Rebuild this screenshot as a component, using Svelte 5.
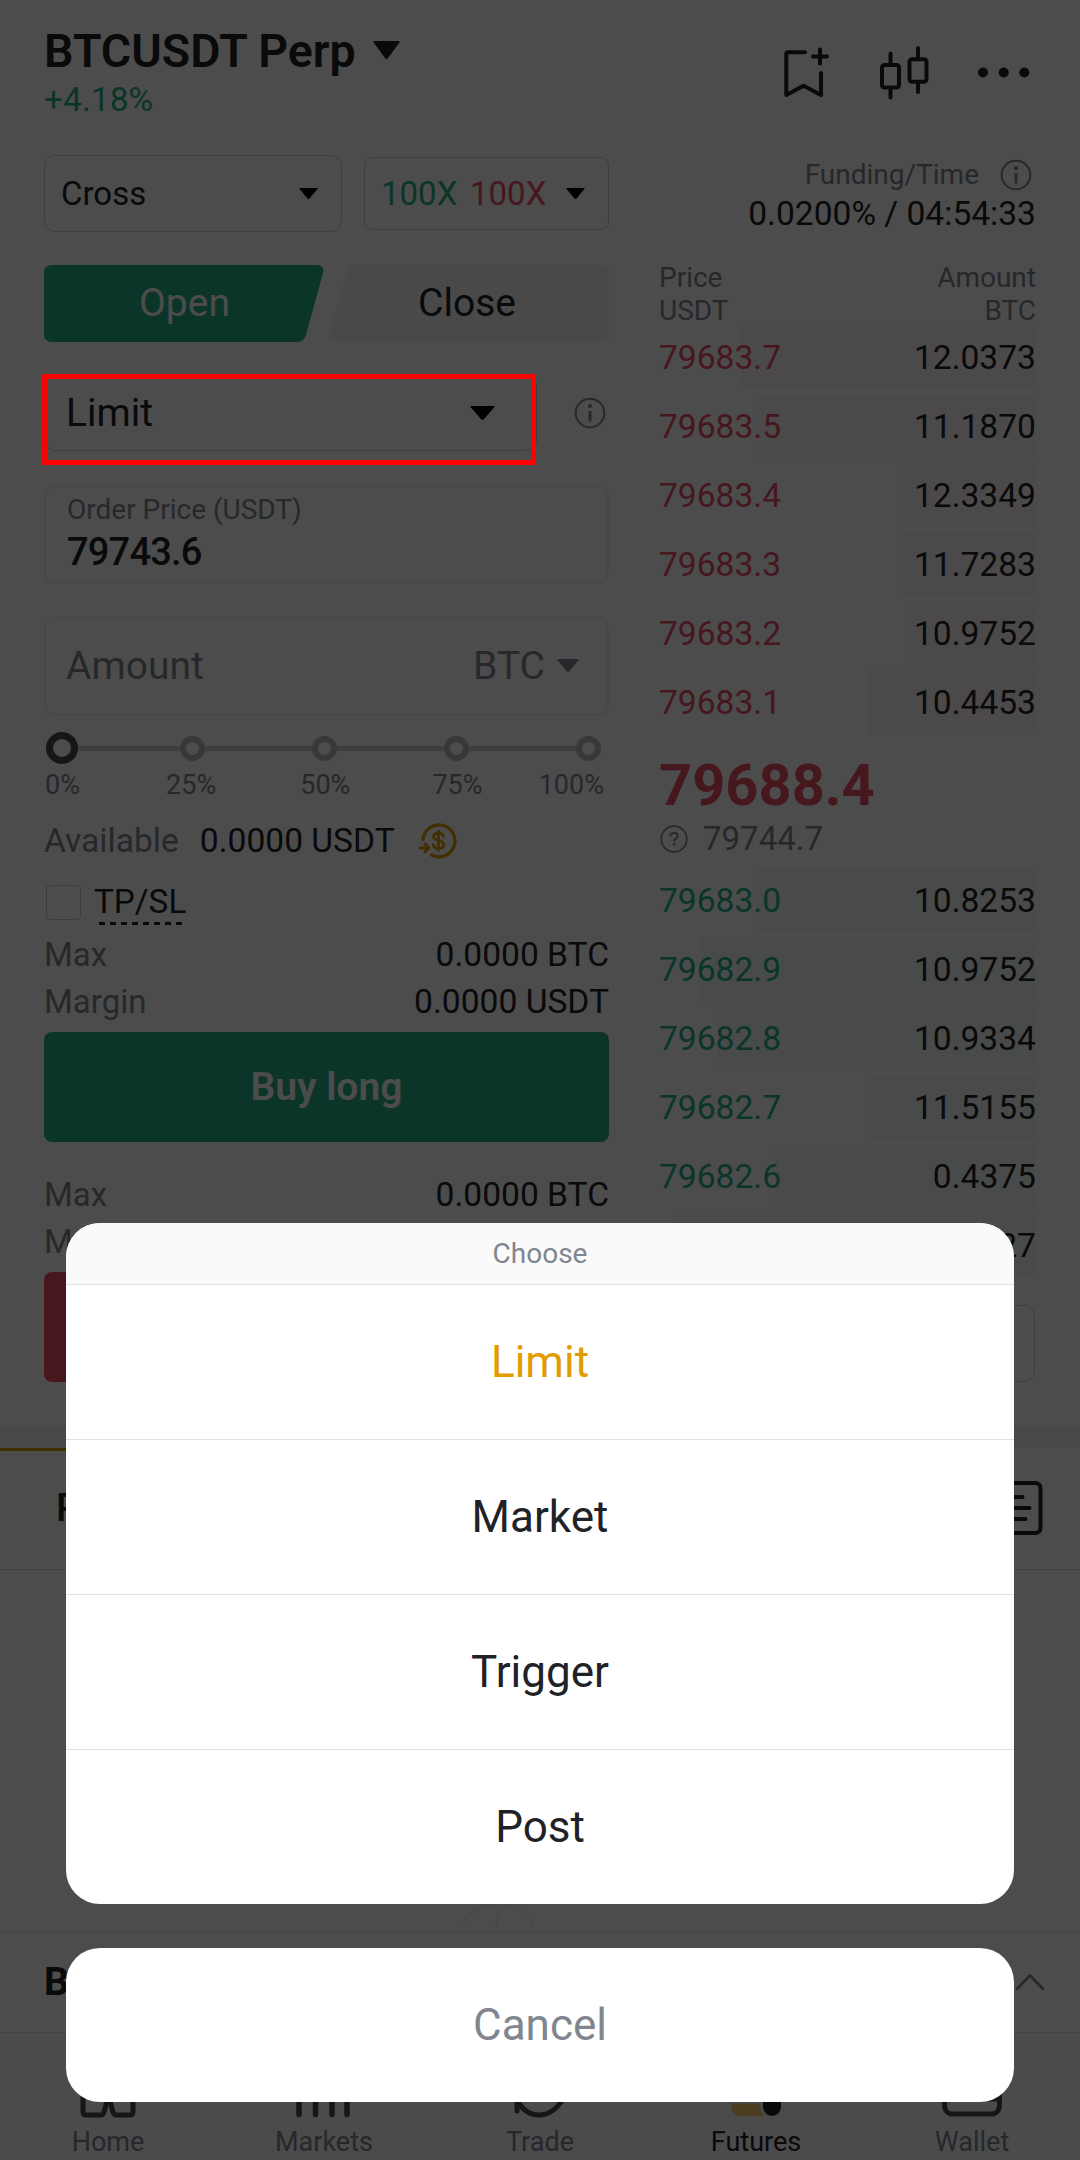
<script>
  const asks = [
    { price: "79683.7", amount: "12.0373", depth: 294 },
    { price: "79683.5", amount: "11.1870", depth: 276 },
    { price: "79683.4", amount: "12.3349", depth: 139 },
    { price: "79683.3", amount: "11.7283", depth: 132 },
    { price: "79683.2", amount: "10.9752", depth: 124 },
    { price: "79683.1", amount: "10.4453", depth: 167 },
  ];

  const bids = [
    { price: "79683.0", amount: "10.8253", depth: 276 },
    { price: "79682.9", amount: "10.9752", depth: 335 },
    { price: "79682.8", amount: "10.9334", depth: 317 },
    { price: "79682.7", amount: "11.5155", depth: 164 },
    { price: "79682.6", amount: "0.4375", depth: 260 },
    { price: "79682.5", amount: "10.2327", depth: 363 },
  ];

  const steps = ["0%", "25%", "50%", "75%", "100%"];
  const options = ["Limit", "Market", "Trigger", "Post"];

  let selected = $state("Limit");
</script>

{#snippet caret(w, h)}
  <svg class="caret" width={w} height={h} viewBox="0 0 18 11" preserveAspectRatio="none">
    <path d="M1 0h16q1.2 0 .5 1l-7.6 9.5q-.9 1-1.8 0L.5 1Q-.2 0 1 0z" fill="currentColor" />
  </svg>
{/snippet}

{#snippet info()}
  <svg class="info" width="32" height="32" viewBox="0 0 32 32" fill="none" stroke="currentColor">
    <circle cx="16" cy="16" r="14.3" stroke-width="2" />
    <circle cx="16" cy="9" r="2.1" fill="currentColor" stroke="none" />
    <path d="M16 14v10.5" stroke-width="3" />
  </svg>
{/snippet}

{#snippet row(item, side)}
  <div class="book-row">
    <div class="depth {side}" style="width: {item.depth}px"></div>
    <span class="price {side}">{item.price}</span>
    <span>{item.amount}</span>
  </div>
{/snippet}

<div class="screen">
  <header>
    <div>
      <div class="pair">BTCUSDT Perp {@render caret(27, 18)}</div>
      <div class="change">+4.18%</div>
    </div>
    <div class="actions">
      <svg width="54" height="58" viewBox="0 0 54 58" fill="none" stroke="currentColor" stroke-width="4" stroke-linecap="round" stroke-linejoin="round">
        <path d="M25 8.300H8q-1.700 0-1.700 1.700V51L23.500 41.700 41 51V29" />
        <path d="M40 5.500v14M33 12.500h14" />
      </svg>
      <svg width="56" height="58" viewBox="0 0 56 58" fill="none" stroke="currentColor" stroke-width="4" stroke-linecap="round">
        <rect x="6" y="21" width="17" height="22.500" rx="2.500" />
        <path d="M14.500 20V9.500M14.500 44v9.500" />
        <rect x="33.500" y="15.300" width="17" height="22.500" rx="2.500" />
        <path d="M42 14V4M42 38.500v9.500" />
      </svg>
      <svg width="60" height="58" viewBox="0 0 60 58" fill="currentColor">
        <circle cx="9" cy="28.500" r="5" />
        <circle cx="29.700" cy="28.500" r="5" />
        <circle cx="50.300" cy="28.500" r="5" />
      </svg>
    </div>
  </header>

  <main>
    <section class="form">
      <div class="modes">
        <div class="select mode">Cross {@render caret(19, 11)}</div>
        <div class="select leverage">
          <span class="buy">100X</span><span class="sell">100X</span>
          {@render caret(19, 11)}
        </div>
      </div>

      <div class="sides">
        <svg width="565" height="77" viewBox="0 0 565 77">
          <path class="open-shape" d="M8 0h264q9 0 7 8l-17 62q-2 7-9 7H8q-8 0-8-8V8q0-8 8-8z" />
          <path class="close-shape" d="M313 0h244q8 0 8 8v61q0 8-8 8H292q-9 0-7-8l18-62q2-7 10-7z" />
        </svg>
        <span class="open">Open</span>
        <span class="close">Close</span>
      </div>

      <div class="type-row">
        <div class="select type">
          {selected}
          {@render caret(25, 14)}
          <div class="highlight"></div>
        </div>
        {@render info()}
      </div>

      <div class="field order">
        <span class="label">Order Price (USDT)</span>
        <span class="value">79743.6</span>
      </div>

      <div class="field amount">
        <span>Amount</span>
        <span class="unit">BTC {@render caret(22, 13)}</span>
      </div>

      <div class="slider">
        {#each steps as step, i}
          <i class:current={i === 0}></i>
        {/each}
      </div>
      <div class="ticks">
        {#each steps as step}
          <span>{step}</span>
        {/each}
      </div>

      <div class="available">
        <span class="muted">Available</span>
        <span class="funds">0.0000 USDT</span>
        <svg width="40" height="38" viewBox="0 0 40 38" fill="none" stroke="currentColor" stroke-width="3.200" stroke-linecap="round" stroke-linejoin="round">
          <path d="M5 17.500A16 16 0 1 1 13.500 33" />
          <path d="M1.700 26h8.500M7 22.200l3.800 3.800L7 29.800" />
          <path d="M25.500 14.500c-.5-2.300-2.300-3.500-5-3.500-3 0-5 1.400-5 3.700 0 2.500 2 3.200 5 3.800s5.200 1.400 5.200 4-2.200 3.900-5.200 3.900c-2.900 0-4.900-1.300-5.400-3.700M20.500 9v19.500" stroke-width="2.700" />
        </svg>
      </div>

      <div class="tpsl">
        <span class="box"></span>
        <span class="tpsl-label">TP/SL
          <svg width="84" height="3" viewBox="0 0 84 3"><path d="M0 1.500h84" stroke="currentColor" stroke-width="3" stroke-dasharray="6 5" /></svg>
        </span>
      </div>

      <div class="line"><span class="muted">Max</span><span>0.0000 BTC</span></div>
      <div class="line"><span class="muted">Margin</span><span>0.0000 USDT</span></div>
      <button class="submit long">Buy long</button>

      <div class="line second"><span class="muted">Max</span><span>0.0000 BTC</span></div>
      <div class="line"><span class="muted">Margin</span></div>
      <button class="submit short" aria-label="Sell short"></button>
    </section>

    <section class="book">
      <div class="funding">Funding/Time {@render info()}</div>
      <div class="countdown">0.0200% / 04:54:33</div>
      <div class="book-head">
        <span>Price<br />USDT</span>
        <span class="right">Amount<br />BTC</span>
      </div>
      {#each asks as item}
        {@render row(item, "sell")}
      {/each}
      <div class="last">79688.4</div>
      <div class="mark">
        <svg width="30" height="30" viewBox="0 0 30 30" fill="none" stroke="currentColor" stroke-width="1.700">
          <circle cx="15" cy="15" r="12.800" />
          <path d="M11.300 12.300c0-2.100 1.500-3.400 3.700-3.400s3.700 1.300 3.700 3.100c0 2.600-3.500 2.700-3.500 5.300" stroke-width="2" />
          <circle cx="15.100" cy="20.300" r="1.300" fill="currentColor" stroke="none" />
        </svg>
        79744.7
      </div>
      {#each bids as item}
        {@render row(item, "buy")}
      {/each}
      <div class="precision"></div>
    </section>
  </main>

  <section class="positions">
    <div class="tabs">
      <span class="tab">Positions</span>
      <svg width="50" height="56" viewBox="0 0 50 56" fill="none" stroke="currentColor" stroke-width="4" stroke-linecap="round">
        <rect x="2.500" y="3" width="44" height="50" rx="5" />
        <path d="M12 17h16.500M12 28h23.500M12 39h19.500" />
      </svg>
    </div>
    <div class="empty">
      <svg width="84" height="30" viewBox="0 0 84 30" fill="none" stroke="currentColor" stroke-width="1.800">
        <path d="M1 30C9 12 24 2 45 1c17 2 29 13 35 29" />
        <path d="M41 30C39 17 43 8 53 2" />
      </svg>
    </div>
    <div class="chart-bar">
      <strong>BTCUSDT Perp Chart</strong>
      <svg width="32" height="20" viewBox="0 0 32 20" fill="none" stroke="currentColor" stroke-width="2.700" stroke-linecap="round" stroke-linejoin="round">
        <path d="M3 17L16 3.500 29 17" />
      </svg>
    </div>
  </section>

  <nav>
    <div class="item">
      <svg width="60" height="56" viewBox="0 0 60 56">
        <path d="M5 20L30 4l25 16v30q0 3-3 3H38q-2 0-3-3-3-8-3-16h-3q0 8-3 16-1 3-3 3H8q-3 0-3-3z" />
      </svg>
      Home
    </div>
    <div class="item">
      <svg width="60" height="56" viewBox="0 0 60 56">
        <path d="M5 22v30.500M21.500 12v40.500M38 18v34.500M53 6v46.500" stroke-width="5.500" />
      </svg>
      Markets
    </div>
    <div class="item">
      <svg width="60" height="56" viewBox="0 0 60 56">
        <path d="M7 49V38q8 15 22 15t24-16M6 22Q14 6 30 5t24 16" />
      </svg>
      Trade
    </div>
    <div class="item active">
      <svg width="60" height="56" viewBox="0 0 60 56">
        <path class="accent" d="M5 41.500h28.500q.5 7 4.500 12.500H13q-8 0-8-12.500z" />
        <rect class="ink" x="37" y="24" width="18" height="30" rx="9" />
      </svg>
      Futures
    </div>
    <div class="item">
      <svg width="60" height="56" viewBox="0 0 60 56">
        <rect x="2.500" y="8" width="55" height="44" rx="8" />
        <path d="M58 23H42q-7 0-7 7t7 7h16" />
      </svg>
      Wallet
    </div>
  </nav>

  <div class="scrim"></div>

  <div class="sheet">
    <div class="group">
      <div class="sheet-title">Choose</div>
      {#each options as option}
        <button class:selected={option === selected} onclick={() => (selected = option)}>{option}</button>
      {/each}
    </div>
    <button class="cancel">Cancel</button>
  </div>
</div>

<style>
  :global(body) {
    margin: 0;
    background: #fff;
  }

  .screen {
    position: relative;
    box-sizing: border-box;
    width: 1080px;
    height: 2160px;
    overflow: hidden;
    background: #fff;
    color: #1f2226;
    font-family: Roboto, "Liberation Sans", sans-serif;
    font-size: 33.600px;
    line-height: 40px;
  }

  .screen * {
    box-sizing: border-box;
  }

  svg {
    display: block;
    flex: none;
  }

  button {
    display: block;
    width: 100%;
    padding: 0;
    border: 0;
    background: none;
    color: inherit;
    font: inherit;
  }

  .muted { color: #81858f; }
  .buy { color: #28b289; }
  .sell { color: #ed4d67; }

  header {
    display: flex;
    justify-content: space-between;
    height: 155px;
    padding: 23px 46px 0 44px;
  }

  .pair {
    display: flex;
    align-items: center;
    gap: 17px;
    font-size: 46.500px;
    font-weight: 600;
    line-height: 56px;
  }

  .pair .caret { margin-bottom: 2px; }

  .change {
    margin-top: 2px;
    line-height: 38px;
    color: #28b289;
  }

  .actions {
    display: flex;
    gap: 42px;
    padding-top: 21px;
  }

  main {
    display: grid;
    grid-template-columns: 565px 377px;
    gap: 50px;
    height: 1271px;
    padding: 0 44px;
  }

  .modes {
    display: flex;
    align-items: center;
    gap: 22px;
  }

  .select {
    display: flex;
    align-items: center;
    justify-content: space-between;
    border: 1px solid #cfcfd2;
    border-radius: 11px;
  }

  .select .caret { color: #000; }

  .mode {
    width: 298px;
    height: 77px;
    padding: 0 23px 0 16px;
    font-size: 33px;
  }

  .leverage {
    width: 245px;
    height: 73px;
    padding: 0 23px 0 16px;
    border-radius: 8px;
    font-size: 33px;
  }

  .leverage .sell { margin: 0 6px 0 -1px; }

  .sides {
    display: grid;
    grid-template-columns: 281px 284px;
    margin-top: 33px;
    font-size: 39px;
    line-height: 77px;
    text-align: center;
  }

  .sides svg {
    grid-area: 1 / 1 / 2 / 3;
  }

  .sides span { grid-row: 1; }
  .open { grid-column: 1; color: #fff; z-index: 0; }
  .close { grid-column: 2; z-index: 0; }
  .open-shape { fill: #28b289; }
  .close-shape { fill: #f3f3f3; }

  .type-row {
    display: flex;
    align-items: center;
    justify-content: space-between;
    margin-top: 32px;
    padding-right: 3px;
    color: #81858f;
  }

  .type {
    position: relative;
    width: 493px;
    height: 77px;
    padding: 0 41px 0 21px;
    color: #1f2226;
    font-size: 39px;
  }

  /* callout stays bright above the scrim */
  .highlight {
    position: absolute;
    z-index: 3;
    top: -1px;
    left: -3px;
    width: 494px;
    height: 91px;
    border: 5px solid #f00;
  }

  .field {
    display: flex;
    height: 99px;
    border: 2px solid #f1f1f2;
    border-radius: 11px;
  }

  .order {
    flex-direction: column;
    margin-top: 34px;
    padding: 6px 21px 0;
  }

  .label {
    color: #81858f;
    font-size: 28px;
    line-height: 34px;
  }

  .value {
    font-size: 38px;
    font-weight: 500;
    line-height: 50px;
    letter-spacing: -0.8px;
  }

  .amount {
    align-items: center;
    justify-content: space-between;
    margin-top: 33px;
    padding: 0 28px 2px 20px;
    color: #81858f;
    font-size: 39px;
  }

  .unit {
    display: flex;
    align-items: center;
    gap: 12px;
  }

  .slider {
    display: flex;
    align-items: center;
    justify-content: space-between;
    height: 32px;
    margin: 16px 8px 0 2px;
    background: linear-gradient(#d0d0d0, #d0d0d0) center / 100% 5px no-repeat;
  }

  .slider i {
    width: 25px;
    height: 25px;
    border: 6px solid #bdbdbd;
    border-radius: 50%;
    background: #fff;
  }

  .slider .current {
    width: 32px;
    height: 32px;
    margin-right: -5px;
    border: 7px solid #4c4c4c;
  }

  .ticks {
    display: flex;
    justify-content: space-between;
    padding: 6px 5px 0 1px;
    color: #81858f;
    font-size: 27px;
    line-height: 30px;
  }

  .ticks span:nth-child(2) { padding-left: 16px; }
  .ticks span:nth-child(3) { padding-left: 14px; }
  .ticks span:nth-child(4) { padding: 0 0 0 12px; margin-right: -14px; }

  .available {
    display: flex;
    align-items: center;
    height: 40px;
    margin-top: 21px;
  }

  .available .funds { margin-left: 21px; }

  .available svg {
    margin-left: 23px;
    color: #e29b00;
  }

  .tpsl {
    display: flex;
    align-items: center;
    height: 40px;
    margin: 21px 0 9px 2px;
  }

  .box {
    width: 35px;
    height: 35px;
    margin-right: 13px;
    border: 1px solid #c8c8cc;
    border-radius: 4px;
  }

  .tpsl-label {
    height: 40px;
    font-size: 33.300px;
  }

  .tpsl-label svg { margin-left: 5px; }

  .line {
    display: flex;
    justify-content: space-between;
    line-height: 47px;
  }

  .line .muted { font-size: 33px; }

  .submit {
    height: 110px;
    margin-top: 7px;
    border-radius: 8px;
    color: #fff;
    font-size: 39px;
    font-weight: 600;
  }

  .long { background: #28b289; }
  .short { background: #ed4d67; }
  .second { margin-top: 29px; }

  .funding {
    display: flex;
    align-items: center;
    justify-content: flex-end;
    gap: 21px;
    height: 39px;
    padding-right: 4px;
    color: #81858f;
    font-size: 28px;
  }

  .countdown { text-align: right; }

  .book-head {
    display: flex;
    justify-content: space-between;
    height: 65px;
    margin-top: 27px;
    color: #81858f;
    font-size: 28px;
    line-height: 33px;
  }

  .right { text-align: right; }

  .book-row {
    position: relative;
    display: flex;
    align-items: center;
    justify-content: space-between;
    height: 63px;
    margin-bottom: 6px;
    padding-top: 1px;
  }

  .book-row span { position: relative; }

  .depth {
    position: absolute;
    top: 0;
    right: 1px;
    height: 100%;
  }

  .depth.sell { background: #fff6f8; }
  .depth.buy { background: #f3faf8; }

  .last {
    height: 78px;
    padding-top: 17px;
    color: #ed4d67;
    font-size: 57.800px;
    font-weight: 700;
    line-height: 56px;
  }

  .mark {
    display: flex;
    align-items: center;
    gap: 14px;
    height: 51px;
    padding-bottom: 10px;
    color: #81858f;
    font-size: 33px;
  }

  .precision {
    height: 77px;
    margin: 28px 1px 0 0;
    border: 1px solid #cfcfd2;
    border-radius: 11px;
  }

  .positions {
    border-top: 22px solid #f5f5f5;
  }

  .tabs {
    display: flex;
    align-items: center;
    justify-content: space-between;
    height: 122px;
    padding-right: 36px;
    border-bottom: 1px solid #dcdcdc;
  }

  .tabs svg { margin-bottom: 2px; }

  .tab {
    height: 121px;
    padding: 0 56px;
    border-top: 3px solid #e29b00;
    font-size: 39px;
    font-weight: 500;
    line-height: 115px;
  }

  .empty {
    display: flex;
    align-items: flex-end;
    height: 362px;
    padding-left: 456px;
    color: #f0f0f0;
  }

  .chart-bar {
    display: flex;
    align-items: center;
    justify-content: space-between;
    height: 101px;
    padding: 0 34px 2px 44px;
    border-top: 1px solid #e4e4e4;
    border-bottom: 1px solid #e4e4e4;
    font-size: 39px;
  }

  .chart-bar svg { color: #81858f; }

  nav {
    display: grid;
    grid-template-columns: repeat(5, 1fr);
    height: 127px;
    padding-top: 29px;
    background: #fafafa;
  }

  .item {
    display: flex;
    flex-direction: column;
    align-items: center;
    gap: 8px;
    color: #81858f;
    font-size: 27px;
    line-height: 32px;
  }

  .item svg {
    fill: none;
    stroke: #4a4a4a;
    stroke-width: 5;
    stroke-linecap: round;
    stroke-linejoin: round;
  }

  .active { color: #1f2226; }
  .item .accent { fill: #ffcb70; stroke: none; }
  .item .ink { fill: #1f2226; stroke: none; }

  .scrim {
    position: absolute;
    z-index: 1;
    inset: 0;
    background: rgba(0, 0, 0, 0.7);
  }

  .sheet {
    position: absolute;
    z-index: 2;
    right: 66px;
    bottom: 58px;
    left: 66px;
    font-size: 44px;
    text-align: center;
  }

  .group,
  .cancel {
    overflow: hidden;
    border-radius: 34px;
    background: #fff;
  }

  .sheet-title {
    height: 61px;
    background: #fafafa;
    color: #81858f;
    font-size: 28px;
    line-height: 61px;
  }

  .group button {
    height: 155px;
    padding-bottom: 1px;
    border-top: 1px solid #e2e2e2;
  }

  .group .selected { color: #e29b00; }

  .cancel {
    height: 154px;
    margin-top: 44px;
    color: #81858f;
  }
</style>
